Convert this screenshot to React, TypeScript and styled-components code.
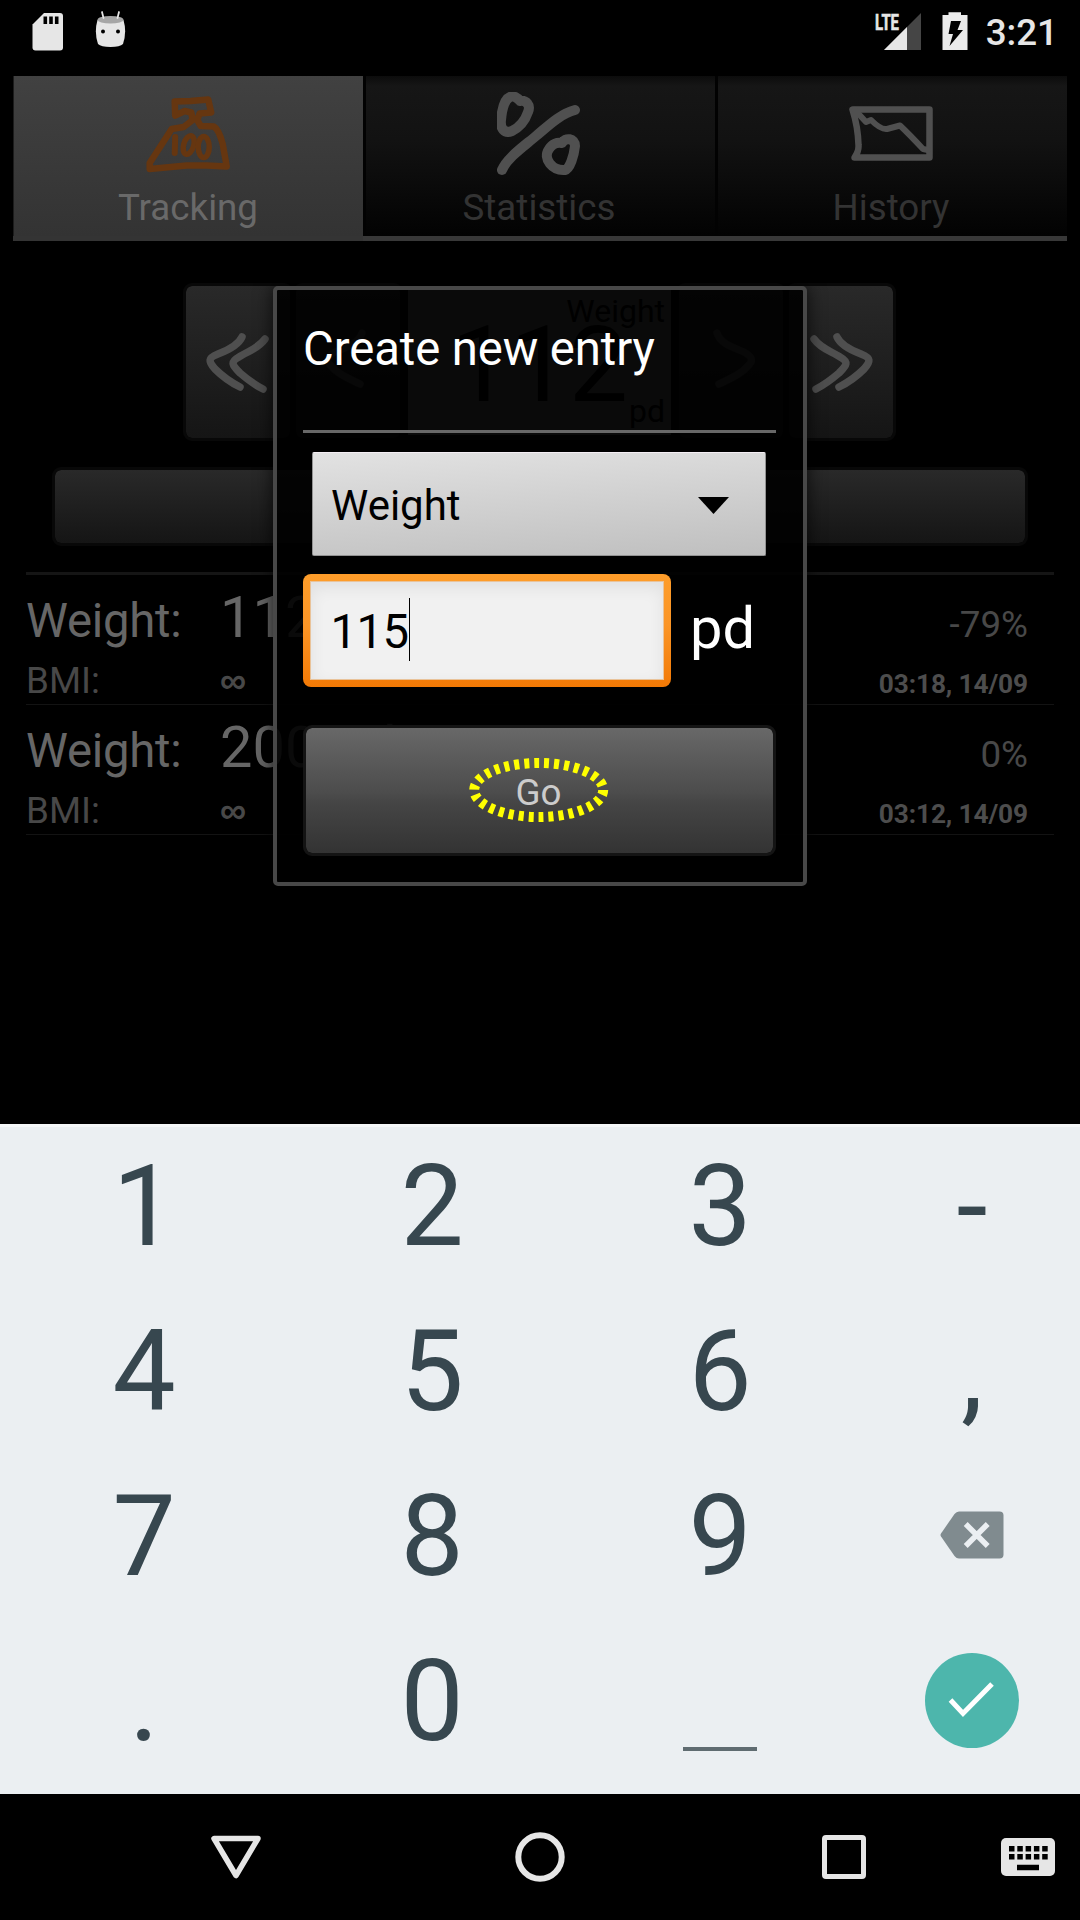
import React from "react";
import styled, { createGlobalStyle } from "styled-components";

const GlobalStyle = createGlobalStyle`
  * { box-sizing: border-box; }
  body { margin: 0; background: #000; }
`;

const Screen = styled.div`
  position: relative;
  width: 1080px;
  height: 1920px;
  overflow: hidden;
  display: flex;
  flex-direction: column;
  background: #000;
  font-family: Roboto, "Liberation Sans", sans-serif;
`;

const StatusBar = styled.header`
  height: 63px;
  display: flex;
  justify-content: space-between;
  padding: 0 22px 0 32px;
`;

const StatusGroup = styled.div`
  display: flex;
`;

const Clock = styled.span`
  color: #e6e6e6;
  font-size: 36.75px;
  font-weight: 500;
  line-height: 44px;
  margin: 11px 0 0 18px;
`;

const AppBody = styled.main`
  height: 1061px;
  padding-top: 13px;
`;

const TabBar = styled.nav`
  display: grid;
  grid-template-columns: 350px 352px 352px;
  height: 165px;
  margin: 0 13px;
`;

const Tab = styled.div<{ $active?: boolean }>`
  display: flex;
  flex-direction: column;
  align-items: center;
  padding-top: 16px;
  border-bottom: 5px solid ${(p) => (p.$active ? "#343434" : "#383838")};
  box-shadow: ${(p) => (p.$active ? "inset 1px 0 #1c1c1c" : "inset 3px 0 #020202")};
  color: ${(p) => (p.$active ? "#696969" : "#333")};
  background: ${(p) =>
    p.$active
      ? "linear-gradient(#414141, #333)"
      : "linear-gradient(#0c0c0c, #161616 10px, #121212 40%, #020202)"};
`;

const TabLabel = styled.span`
  font-size: 36.75px;
  line-height: 44px;
  margin-top: 10px;
`;

const Stepper = styled.section`
  display: grid;
  grid-template-columns: 110px 110px 273px 110px 110px;
  width: 713px;
  height: 158px;
  margin: 42px 0 0 183px;
`;

const DarkButton = styled.div`
  display: flex;
  border: 3px solid #080808;
  border-radius: 9px;
  background: linear-gradient(#292929, #151515) padding-box;
`;

const StepButton = styled(DarkButton)<{ $flip?: boolean }>`
  transform: ${(p) => (p.$flip ? "scaleX(-1)" : "none")};
`;

const Reading = styled.div`
  display: flex;
  flex-direction: column;
  align-items: flex-end;
  margin: 3px 5px 6px;
  padding-right: 6px;
  background: #666;
  color: #000;
  font-size: 32px;
  line-height: 36px;
`;

const ReadingMain = styled.div`
  height: 82px;
  font-size: 105px;
  line-height: 82px;
  padding-right: 37px;
  margin-top: 3px;
  margin-bottom: -21px;
`;

const ReadingCaption = styled.span`
  padding-top: 7px;
  height: 36px;
`;

const WideButton = styled(DarkButton)`
  height: 79px;
  margin: 26px 52px 0;
`;

const EntryList = styled.section`
  margin: 26px 26px 0;
  border-top: 3px solid #151515;
`;

const Entry = styled.article`
  height: 130px;
  padding: 8px 26px 0 0;
  border-bottom: 1px solid #131313;
`;

const EntryLine = styled.div<{ $height: number }>`
  display: grid;
  grid-template-columns: 194px 1fr auto;
  align-items: baseline;
  height: ${(p) => p.$height}px;
`;

const EntryText = styled.span<{ $size: number; $color: string; $bold?: boolean; $spacing?: number }>`
  font-size: ${(p) => p.$size}px;
  font-weight: ${(p) => (p.$bold ? 700 : 400)};
  letter-spacing: ${(p) => p.$spacing ?? 0}px;
  color: ${(p) => p.$color};
  white-space: nowrap;
`;

const BmiValue = styled.span`
  font-family: "Liberation Sans", sans-serif;
  font-size: 36.75px;
  font-weight: 700;
  color: #484848;
`;

const Dialog = styled.div`
  position: absolute;
  left: 273px;
  top: 286px;
  width: 534px;
  height: 600px;
  padding: 31px 27px 0 26px;
  border: 4px solid #484848;
  border-radius: 5px;
  background: rgba(0, 0, 0, 0.9) padding-box;
  box-shadow: 0 0 18px rgba(0, 0, 0, 0.75);
`;

const DialogTitle = styled.h1`
  margin: 0;
  height: 112px;
  border-bottom: 3px solid #686868;
  color: #fff;
  font-size: 47.25px;
  font-weight: 400;
  letter-spacing: -0.08px;
  line-height: 56px;
`;

const Spinner = styled.div`
  display: flex;
  align-items: center;
  justify-content: space-between;
  width: 454px;
  height: 104px;
  margin: 19px 0 0 9px;
  padding: 2px 36px 0 18px;
  border: 1px solid #929292;
  border-top-color: #f4eef4;
  border-radius: 2px;
  background: linear-gradient(176deg, #e2e2e2, #d2d2d2 45%, #bfbfbf);
  color: #000;
  font-size: 42px;
`;

const ValueRow = styled.div`
  display: flex;
  height: 113px;
  margin-top: 18px;
`;

const ValueField = styled.div`
  width: 368px;
  padding: 7px;
  border-radius: 8px;
  background: linear-gradient(#fe9d2a, #fb9526 45%, #f27905);
`;

const ValueInner = styled.div`
  display: flex;
  height: 99px;
  padding: 16px 0 0 19.5px;
  border: 1px solid #e9c39a;
  background: #f1f1f1;
  box-shadow: inset 0 6px 16px rgba(0, 0, 0, 0.07);
  color: #000;
  font-size: 47.25px;
  letter-spacing: -0.5px;
  line-height: 68px;
`;

const Caret = styled.i`
  width: 1px;
  height: 63px;
  background: #000;
`;

const Unit = styled.span`
  margin: 18px 0 0 19px;
  color: #fff;
  font-size: 57.75px;
  line-height: 72px;
`;

const GoButton = styled.div`
  position: relative;
  display: flex;
  justify-content: center;
  height: 131px;
  width: 473px;
  margin-top: 38px;
  padding: 43px 2px 0 0;
  border: 3px solid #141414;
  border-radius: 9px;
  background: linear-gradient(#686868, #4c4c4c 52%, #454545 60%, #333) padding-box;
  color: #ccc;
  font-size: 36.75px;
  line-height: 44px;
`;

const Highlight = styled.svg`
  position: absolute;
  left: 160px;
  top: 26px;
`;

const Keyboard = styled.section`
  display: grid;
  grid-template-columns: 288px 288px 288px 216px;
  grid-template-rows: repeat(4, 165px);
  height: 670px;
  padding-top: 1px;
  border-top: 3px solid #f5f7f8;
  background: #ebeff2;
  color: #37474f;
`;

const Key = styled.div`
  display: flex;
  justify-content: center;
  font-size: 112.5px;
  line-height: 157px;
`;

const SpaceMark = styled.i`
  width: 74px;
  height: 4px;
  margin-top: 124px;
  background: #5f6c71;
`;

const DoneCircle = styled.div`
  width: 94px;
  height: 95px;
  margin-top: 29.5px;
  border-radius: 50%;
  background: #4db6ac;
`;

const NavBar = styled.footer`
  height: 126px;
  display: grid;
  grid-template-columns: 84px 304px 304px 304px 84px;
  padding: 0;
  place-items: center;
`;

const doubleChevron = [
  "M56 51C52 60 40 65 32 68C22 72 22 75 29 83C37 91 46 97 54 101",
  "M79 53C72 63 60 66 53 71C44 76 46 79 54 87C61 93 69 99 77 103",
];
const singleChevron = ["M66 47C62 60 45 62 36 68C29 73 31 76 36 81C43 89 54 93 64 98"];

function Chevron({ paths }: { paths: string[] }) {
  return (
    <svg width="104" height="152" viewBox="0 0 104 152" fill="none" stroke="#4f4f4f" strokeWidth="7.500" strokeLinecap="round" strokeLinejoin="round">
      {paths.map((d) => (
        <path key={d} d={d} />
      ))}
    </svg>
  );
}

function ScaleIcon() {
  return (
    <svg width="84" height="84" viewBox="-.7 0 84 84" fill="none" stroke="#663610" strokeWidth="6.500" strokeLinejoin="round" strokeLinecap="round">
      <path d="M28 9.500L44 9L61.500 7.500L64.500 20.500L53 21.500L50.500 28L54 34L67 34.500Q72 37 76 52L80 74.500L60 73.500L40 73.500L3 77V71L25 37L37 35L46 28L44.500 20.500L38 19L28.500 23.500Z" />
      <path d="M28.500 45L28 61" strokeWidth="6" />
      <ellipse cx="42" cy="53" rx="5" ry="9.500" transform="rotate(17 42 53)" strokeWidth="5.500" />
      <ellipse cx="57" cy="55" rx="5.500" ry="10.500" strokeWidth="5.500" />
    </svg>
  );
}

function PercentIcon() {
  return (
    <svg width="84" height="84" viewBox="0 0 84 84" fill="none" stroke="#505050" strokeWidth="10" strokeLinejoin="round" strokeLinecap="round">
      <path d="M13 5C16 3 21 6 23 9C29 8 34 13 31 20C28 29 23 35 15 39C7 42 3 36 4 28C5 16 8 7 13 5Z" />
      <path d="M5 78C10 66 26 55 39 44C51 34 63 22 78 18" />
      <path d="M65 51C68 45 78 46 78 54C77 63 73 77 68 78C56 79 45 67 52 57C55 52 60 50 65 51Z" />
    </svg>
  );
}

function HistoryIcon() {
  return (
    <svg width="84" height="84" viewBox="0 0 84 84" fill="none" stroke="#505050" strokeWidth="6.500" strokeLinejoin="round" strokeLinecap="round">
      <path d="M3.500 17.500H80.500V65.500H5.500Q10 59 9.500 53Q9 35 3.500 17.500Z" />
      <path d="M6 18L17 30L22 28Q32 38 38 37L51 33.500Q61 43 74 57L79 58" strokeWidth="6" />
    </svg>
  );
}

function SdCardIcon() {
  return (
    <svg width="31" height="52" viewBox="0 0 31 52">
      <path d="M12 13H28Q31 13 31 16V47.500Q31 50.500 28 50.500H3.500Q.5 50.500 .5 47.500V24.500Z" fill="#e6e6e6" />
      <path d="M11.500 16.500h3.600v7.500h-3.600zM17.200 16.500h3.600v7.500h-3.600zM22.900 16.500h3.600v7.500h-3.600z" fill="#000" />
    </svg>
  );
}

const DroidSvg = styled.svg`
  margin-left: 32px;
`;

function DroidIcon() {
  return (
    <DroidSvg width="31" height="52" viewBox="0 0 31 52">
      <path d="M2.500 20Q15 17 28.500 20Q32 32 28 44Q25 47 15.500 47Q6 47 3 44Q-1 32 2.500 20Z" fill="#e6e6e6" />
      <ellipse cx="15.500" cy="19.700" rx="13" ry="3.800" fill="#a6a6a6" />
      <path d="M7 12L8.500 18M24 12L22.500 18" stroke="#e6e6e6" strokeWidth="1.800" strokeLinecap="round" />
      <circle cx="8" cy="31.500" r="2" fill="#000" />
      <circle cx="23" cy="31.500" r="2" fill="#000" />
    </DroidSvg>
  );
}

function SignalIcon() {
  return (
    <svg width="48" height="52" viewBox="0 0 48 52">
      <path d="M46 13V50H9Z" fill="#454545" />
      <path d="M32 27V50H9Z" fill="#e6e6e6" />
      <text x="0" y="29.500" fontSize="22.500" fontWeight="700" fill="#e6e6e6" stroke="#e6e6e6" strokeWidth=".6" textLength="24" lengthAdjust="spacingAndGlyphs" fontFamily="Roboto, sans-serif">
        LTE
      </text>
    </svg>
  );
}

const BatterySvg = styled.svg`
  margin-left: 19px;
`;

function BatteryIcon() {
  return (
    <BatterySvg width="26" height="52" viewBox="0 0 26 52">
      <path d="M6.500 12.300H19V15H25.500V50H.5V15H6.500Z" fill="#ebebeb" />
      <path d="M9 21H19L15.500 30H21L7.500 46L11 34H6.500Z" fill="#000" />
    </BatterySvg>
  );
}

const BackspaceSvg = styled.svg`
  margin: 53px 0 0 -1px;
`;

function BackspaceIcon() {
  return (
    <BackspaceSvg width="64" height="48" viewBox="0 0 64 48">
      <path d="M19 .5H59.500Q63.500 .5 63.500 4.500V43.500Q63.500 47.500 59.500 47.500H19Q16.500 47.500 14.500 45L1 25.500Q0 24 1 22.500L14.500 3Q16.500 .5 19 .5Z" fill="#808b8f" />
      <path d="M26 13L48 35M48 13L26 35" stroke="#ebeff2" strokeWidth="5.500" transform="translate(-.3 0)" />
    </BackspaceSvg>
  );
}

const CheckSvg = styled.svg`
  display: block;
`;

const ImeSvg = styled.svg`
  margin-left: -21px;
`;

interface EntryData {
  value: string;
  change: string;
  time: string;
}

const entries: EntryData[] = [
  { value: "112 pd", change: "-79%", time: "03:18, 14/09" },
  { value: "200 pd", change: "0%", time: "03:12, 14/09" },
];

export default function App() {
  return (
    <Screen>
      <GlobalStyle />
      <StatusBar>
        <StatusGroup>
          <SdCardIcon />
          <DroidIcon />
        </StatusGroup>
        <StatusGroup>
          <SignalIcon />
          <BatteryIcon />
          <Clock>3:21</Clock>
        </StatusGroup>
      </StatusBar>

      <AppBody>
        <TabBar>
          <Tab $active>
            <ScaleIcon />
            <TabLabel>Tracking</TabLabel>
          </Tab>
          <Tab>
            <PercentIcon />
            <TabLabel>Statistics</TabLabel>
          </Tab>
          <Tab>
            <HistoryIcon />
            <TabLabel>History</TabLabel>
          </Tab>
        </TabBar>

        <Stepper>
          <StepButton><Chevron paths={doubleChevron} /></StepButton>
          <StepButton><Chevron paths={singleChevron} /></StepButton>
          <Reading>
            <ReadingCaption>Weight</ReadingCaption>
            <ReadingMain>112</ReadingMain>
            <ReadingCaption>pd</ReadingCaption>
          </Reading>
          <StepButton $flip><Chevron paths={singleChevron} /></StepButton>
          <StepButton $flip><Chevron paths={doubleChevron} /></StepButton>
        </Stepper>

        <WideButton />

        <EntryList>
          {entries.map((e) => (
            <Entry key={e.time}>
              <EntryLine $height={76}>
                <EntryText $size={47.25} $color="#666" $spacing={-0.25}>Weight:</EntryText>
                <EntryText $size={57.75} $color="#666">{e.value}</EntryText>
                <EntryText $size={36.75} $color="#484848">{e.change}</EntryText>
              </EntryLine>
              <EntryLine $height={44}>
                <EntryText $size={36.75} $color="#484848">BMI:</EntryText>
                <BmiValue>∞</BmiValue>
                <EntryText $size={26.25} $color="#4d4d4d" $spacing={-0.12} $bold>{e.time}</EntryText>
              </EntryLine>
            </Entry>
          ))}
        </EntryList>
      </AppBody>

      <Keyboard>
        {["1", "2", "3", "-", "4", "5", "6", ",", "7", "8", "9"].map((k) => (
          <Key key={k}>{k}</Key>
        ))}
        <Key><BackspaceIcon /></Key>
        <Key>.</Key>
        <Key>0</Key>
        <Key><SpaceMark /></Key>
        <Key>
          <DoneCircle>
            <CheckSvg width="94" height="95" viewBox="0 0 94 95" fill="none" stroke="#fff" strokeWidth="5">
              <path d="M25.500 47L38 60.500L67 31" />
            </CheckSvg>
          </DoneCircle>
        </Key>
      </Keyboard>

      <NavBar>
        <span />
        <svg width="50" height="50" viewBox="0 0 50 50" fill="none" stroke="#e6e6e6" strokeWidth="5.500" strokeLinejoin="round">
          <path d="M3 6.500H47L25 43.500Z" />
        </svg>
        <svg width="50" height="50" viewBox="0 0 50 50" fill="none" stroke="#e6e6e6" strokeWidth="6">
          <circle cx="25" cy="25" r="21.700" />
        </svg>
        <svg width="50" height="50" viewBox="0 0 50 50" fill="none" stroke="#e6e6e6" strokeWidth="5">
          <rect x="5.500" y="5.500" width="39" height="39" rx="1.500" />
        </svg>
        <ImeSvg width="54" height="38" viewBox="0 0 54 38">
          <rect width="54" height="38" rx="5" fill="#e6e6e6" />
          <path d="M8 10.700H47M8 18.700H47" stroke="#000" strokeWidth="5.500" strokeDasharray="5.500 2.800" />
          <path d="M16 29.500H38" stroke="#000" strokeWidth="5.500" />
        </ImeSvg>
      </NavBar>

      <Dialog>
        <DialogTitle>Create new entry</DialogTitle>
        <Spinner>
          Weight
          <svg width="31" height="17" viewBox="0 0 31 17">
            <path d="M0 0H31L15.500 17Z" fill="#000" />
          </svg>
        </Spinner>
        <ValueRow>
          <ValueField>
            <ValueInner>
              115
              <Caret />
            </ValueInner>
          </ValueField>
          <Unit>pd</Unit>
        </ValueRow>
        <GoButton>
          Go
          <Highlight width="146" height="72" viewBox="0 0 146 72" fill="none">
            <ellipse cx="72.700" cy="36" rx="64.500" ry="27" stroke="#ff0" strokeWidth="10" strokeDasharray="5 4.990" />
          </Highlight>
        </GoButton>
      </Dialog>
    </Screen>
  );
}
